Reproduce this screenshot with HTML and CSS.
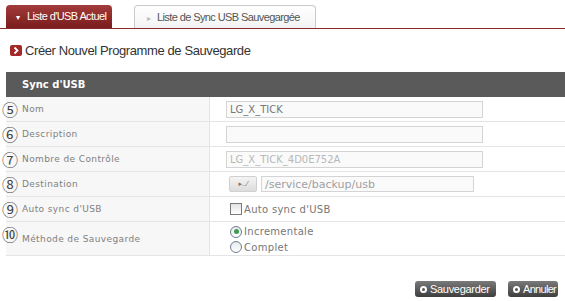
FILE: index.html
```html
<!DOCTYPE html>
<html lang="fr">
<head>
    <meta charset="UTF-8">
    <meta name="viewport" content="width=device-width, initial-scale=1.0">
    <title>Sync d'USB</title>
    <link rel="stylesheet" href="styles.css">
</head>
<body>
    <div class="tabs">
        <div class="tab active"><span class="arrow">&#9662;</span>Liste d'USB Actuel</div>
        <div class="tab"><span class="arrow">&#9656;</span>Liste de Sync USB Sauvegargée</div>
    </div>

    <div class="title">
        <span class="title-icon">
            <svg width="12" height="11" viewBox="0 0 12 11"><path d="M4.5 2.5 L7.5 5.5 L4.5 8.5" fill="none" stroke="#fff" stroke-width="1.8"/></svg>
        </span>
        Créer Nouvel Programme de Sauvegarde
    </div>

    <div class="panel">
        <div class="panel-head">Sync d'USB</div>

        <div class="row">
            <div class="label"><span class="num">⑤</span><span class="ltxt">Nom</span></div>
            <div class="value"><div class="field">LG_X_TICK</div></div>
        </div>
        <div class="row">
            <div class="label"><span class="num">⑥</span><span class="ltxt">Description</span></div>
            <div class="value"><div class="field"></div></div>
        </div>
        <div class="row">
            <div class="label"><span class="num">⑦</span><span class="ltxt">Nombre de Contrôle</span></div>
            <div class="value"><div class="field disabled">LG_X_TICK_4D0E752A</div></div>
        </div>
        <div class="row">
            <div class="label"><span class="num">⑧</span><span class="ltxt">Destination</span></div>
            <div class="value">
                <div class="browse">&#9656;..⁄</div>
                <div class="field path">/service/backup/usb</div>
            </div>
        </div>
        <div class="row">
            <div class="label"><span class="num">⑨</span><span class="ltxt">Auto sync d'USB</span></div>
            <div class="value"><span class="check"></span><span class="opt">Auto sync d'USB</span></div>
        </div>
        <div class="row tall">
            <div class="label"><span class="num">⑩</span><span class="ltxt">Méthode de Sauvegarde</span></div>
            <div class="value radios">
                <div class="radio-line"><span class="radio on"></span><span class="opt">Incrementale</span></div>
                <div class="radio-line"><span class="radio"></span><span class="opt">Complet</span></div>
            </div>
        </div>
    </div>

    <div class="actions">
        <button class="btn save"><span class="dot"></span>Sauvegarder</button>
        <button class="btn cancel"><span class="dot"></span>Annuler</button>
    </div>
</body>
</html>
```

FILE: styles.css
```css
body {
    margin: 0;
    background: #fff;
    font-family: "Liberation Sans", Arial, sans-serif;
    width: 565px;
    height: 301px;
    overflow: hidden;
}
.tabs {
    display: flex;
    gap: 22px;
    padding: 5px 0 0 6px;
    height: 23px;
    border-bottom: 1px solid #8a2b2b;
}
.tab {
    box-sizing: border-box;
    height: 23px;
    width: 182px;
    border: 1px solid #cacaca;
    border-bottom: none;
    border-radius: 4px 4px 0 0;
    background: linear-gradient(#ffffff, #f3f3f3);
    color: #555;
    font-size: 11px;
    letter-spacing: -0.6px;
    line-height: 22px;
    padding-left: 12px;
}
.tab .arrow {
    color: #bbb;
    font-size: 8px;
    margin-right: 6px;
    letter-spacing: 0;
}
.tab.active {
    width: 106px;
    border: none;
    background: linear-gradient(#a33b3b, #7a1d1d);
    color: #fff;
    padding-left: 10px;
}
.tab.active .arrow {
    color: #fff;
    margin-right: 7px;
}
.title {
    display: flex;
    align-items: center;
    margin: 13px 0 0 10px;
    height: 16px;
    font-size: 13px;
    letter-spacing: -0.4px;
    color: #333;
}
.title-icon {
    display: flex;
    width: 12px;
    height: 11px;
    background: #a3282a;
    border-radius: 2px;
    margin-right: 3px;
}
.panel {
    margin: 14px 0 0 6px;
}
.panel-head {
    height: 25px;
    background: #5a5a5a;
    color: #fff;
    font-family: "DejaVu Sans", sans-serif;
    font-weight: bold;
    font-size: 10px;
    line-height: 25px;
    padding-left: 16px;
}
.row {
    display: flex;
    height: 24px;
    border-bottom: 1px solid #e4e4e4;
}
.row.tall {
    height: 33px;
}
.label {
    width: 203px;
    border-right: 1px solid #e4e4e4;
    background: #f7f7f7;
    display: flex;
    align-items: center;
}
.row.tall .label {
    align-items: flex-start;
}
.row.tall .ltxt {
    align-self: center;
}
.num {
    width: 16px;
    margin-left: -4px;
    font-family: "Noto Sans CJK KR", sans-serif;
    font-size: 16px;
    line-height: 17px;
    color: #444;
    text-align: center;
}
.row.tall .num {
    margin-top: 4px;
}
.ltxt {
    margin-left: 4px;
    font-family: "DejaVu Sans", sans-serif;
    font-size: 9px;
    letter-spacing: 0.4px;
    color: #808080;
}
.value {
    flex: 1;
    display: flex;
    align-items: center;
    padding-left: 16px;
    font-family: "DejaVu Sans", sans-serif;
    font-size: 10px;
    color: #777;
}
.field {
    box-sizing: border-box;
    width: 257px;
    height: 17px;
    border: 1px solid #d4d4d4;
    background: #fafafa;
    padding-left: 3px;
    line-height: 15px;
}
.field.disabled {
    color: #b8b8b8;
}
.browse {
    box-sizing: border-box;
    width: 28px;
    height: 16px;
    margin-left: 3px;
    border: 1px solid #d0d0d0;
    border-radius: 2px;
    background: linear-gradient(#f4f4f4, #dcdcdc);
    font-size: 7px;
    color: #777;
    text-align: center;
    line-height: 14px;
}
.field.path {
    width: 213px;
    height: 16px;
    margin-left: 4px;
    font-size: 11px;
    color: #a0a0a0;
}
.check {
    box-sizing: border-box;
    width: 12px;
    height: 12px;
    margin-left: 4px;
    border: 1px solid #7a7a7a;
    background: linear-gradient(#e2e2e2, #fff);
}
.opt {
    margin-left: 2px;
    letter-spacing: 0.3px;
}
.radios {
    flex-direction: column;
    align-items: flex-start;
    justify-content: flex-start;
    padding-top: 2px;
}
.radio-line {
    display: flex;
    align-items: center;
    height: 16px;
}
.radio {
    box-sizing: border-box;
    width: 12px;
    height: 12px;
    margin-left: 4px;
    border: 1px solid #6e7e8e;
    border-radius: 50%;
    background: linear-gradient(#e6e9ee, #fff);
    display: flex;
    align-items: center;
    justify-content: center;
}
.radio.on::after {
    content: "";
    width: 5px;
    height: 5px;
    border-radius: 50%;
    background: #3f9b4e;
}
.actions {
    display: flex;
    justify-content: flex-end;
    gap: 12px;
    margin-top: 25px;
    padding-right: 7px;
}
.btn {
    box-sizing: border-box;
    display: flex;
    align-items: center;
    height: 16px;
    padding: 0 0 0 5px;
    border: none;
    border-radius: 3px;
    background: linear-gradient(#7a7a7a, #3e3e3e);
    color: #fff;
    font-family: "Liberation Sans", Arial, sans-serif;
    font-size: 11px;
    letter-spacing: -0.3px;
    white-space: nowrap;
}
.btn.save {
    width: 81px;
}
.btn.cancel {
    width: 50px;
    letter-spacing: -0.7px;
}
.dot {
    box-sizing: border-box;
    flex: none;
    width: 7px;
    height: 7px;
    border-radius: 50%;
    border: 2px solid #fff;
    background: #555;
    margin-right: 3px;
}
```
